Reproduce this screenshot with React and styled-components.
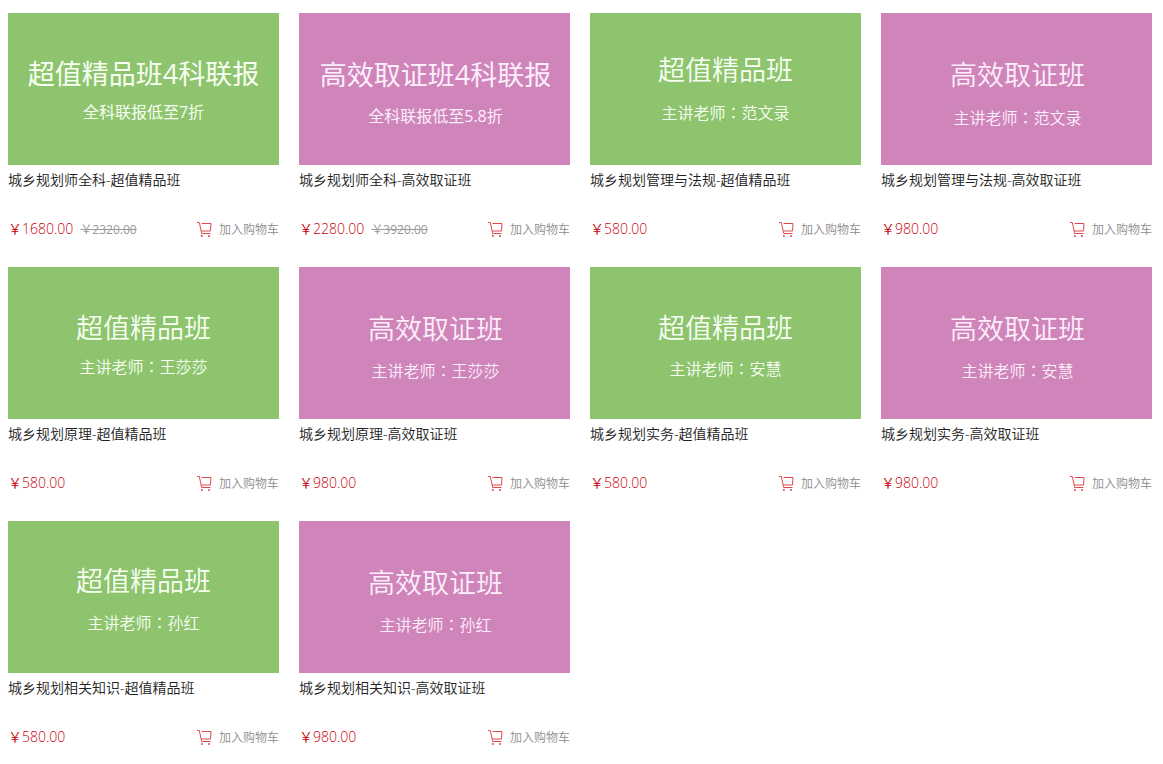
import React from "react";
import styled, { createGlobalStyle } from "styled-components";

const GlobalStyle = createGlobalStyle`
  * { box-sizing: border-box; }
  body {
    margin: 0;
    background: #fff;
    font-family: "Open Sans", "Noto Sans CJK SC", sans-serif;
    font-weight: 350;
    color: #222;
  }
`;

const CourseGrid = styled.main`
  display: grid;
  grid-template-columns: repeat(4, minmax(0, 1fr));
  gap: 26px 20px;
  padding: 13px 11px 12px 8px;
`;

const Card = styled.article`
  display: flex;
  flex-direction: column;
`;

const Cover = styled.a`
  display: flex;
  flex-direction: column;
  align-items: center;
  gap: ${(p) => p.$gap}px;
  aspect-ratio: 271 / 152;
  padding-top: ${(p) => p.$top}px;
  padding-left: ${(p) => (p.$tone === "pink" ? 2 : 0)}px;
  background: ${(p) => (p.$tone === "pink" ? "#cf85ba" : "#8ec46e")};
  color: ${(p) => (p.$tone === "pink" ? "#fdeefb" : "#f8fff3")};
  font-weight: ${(p) => (p.$digits ? 400 : 350)};
  text-decoration: none;
  white-space: nowrap;
`;

const CoverTitle = styled.span`
  font-size: 27px;
  line-height: 32px;
`;

const CoverNote = styled.span`
  font-size: 16px;
  line-height: 20px;
`;

const Colon = styled.span`
  font-family: "Noto Sans CJK TC", sans-serif;
`;

const Name = styled.h3`
  margin: 3px 0 25px;
  font-size: 14px;
  font-weight: 350;
  line-height: 24px;
`;

const Footer = styled.div`
  display: flex;
  align-items: center;
  height: 24px;
  line-height: 24px;
`;

const Price = styled.span`
  font-size: 14px;
  color: #c8000a;
`;

const OldPrice = styled.del`
  margin-left: 7px;
  padding-top: 2px;
  font-size: 12px;
  font-weight: 400;
  color: #999;
`;

const CartButton = styled.button`
  display: flex;
  align-items: center;
  gap: 6px;
  margin-left: auto;
  padding: 2px 0 0;
  border: 0;
  background: none;
  font: inherit;
  font-size: 12px;
  color: #8c8c8c;
  cursor: pointer;
`;

const CartGlyph = styled.svg`
  display: block;
  margin-bottom: 2px;
`;

function CartIcon() {
  return (
    <CartGlyph width="16" height="16" viewBox="0 0 16 16" fill="none" stroke="#e0484c" strokeWidth="1" aria-hidden="true">
      <path d="M0 1.5h2.3l2.4 11h8.8" />
      <path d="M4.5 2.5h9.5l-.5 7.5H4.2" />
      <circle cx="4.9" cy="14.9" r="1" fill="#e0484c" stroke="none" />
      <circle cx="12" cy="14.9" r="1" fill="#e0484c" stroke="none" />
    </CartGlyph>
  );
}

const VALUE = "超值精品班";
const FAST = "高效取证班";

const courses = [
  { subject: "城乡规划师全科", plan: VALUE, suffix: "4科联报", note: "全科联报低至7折", price: "1680.00", old: "2320.00", top: 45, gap: 12 },
  { subject: "城乡规划师全科", plan: FAST, suffix: "4科联报", note: "全科联报低至5.8折", price: "2280.00", old: "3920.00", top: 46, gap: 15 },
  { subject: "城乡规划管理与法规", plan: VALUE, teacher: "范文录", price: "580.00", top: 41, gap: 16 },
  { subject: "城乡规划管理与法规", plan: FAST, teacher: "范文录", price: "980.00", top: 46, gap: 16 },
  { subject: "城乡规划原理", plan: VALUE, teacher: "王莎莎", price: "580.00", top: 45, gap: 12 },
  { subject: "城乡规划原理", plan: FAST, teacher: "王莎莎", price: "980.00", top: 46, gap: 15 },
  { subject: "城乡规划实务", plan: VALUE, teacher: "安慧", price: "580.00", top: 45, gap: 14 },
  { subject: "城乡规划实务", plan: FAST, teacher: "安慧", price: "980.00", top: 46, gap: 15 },
  { subject: "城乡规划相关知识", plan: VALUE, teacher: "孙红", price: "580.00", top: 44, gap: 15 },
  { subject: "城乡规划相关知识", plan: FAST, teacher: "孙红", price: "980.00", top: 46, gap: 15 },
];

function CourseCard({ course }) {
  const { subject, plan, suffix = "", note, teacher, price, old, top, gap } = course;
  return (
    <Card>
      <Cover
        href="#"
        $tone={plan === FAST ? "pink" : "green"}
        $digits={Boolean(suffix)}
        $top={top}
        $gap={gap}
      >
        <CoverTitle>{plan + suffix}</CoverTitle>
        <CoverNote>
          {teacher ? <>主讲老师<Colon lang="zh-TW">：</Colon>{teacher}</> : note}
        </CoverNote>
      </Cover>
      <Name>{`${subject}-${plan}`}</Name>
      <Footer>
        <Price>{`￥${price}`}</Price>
        {old && <OldPrice>{`￥${old}`}</OldPrice>}
        <CartButton type="button">
          <CartIcon />
          加入购物车
        </CartButton>
      </Footer>
    </Card>
  );
}

export default function App() {
  return (
    <>
      <GlobalStyle />
      <CourseGrid>
        {courses.map((course) => (
          <CourseCard key={course.subject + course.plan} course={course} />
        ))}
      </CourseGrid>
    </>
  );
}
